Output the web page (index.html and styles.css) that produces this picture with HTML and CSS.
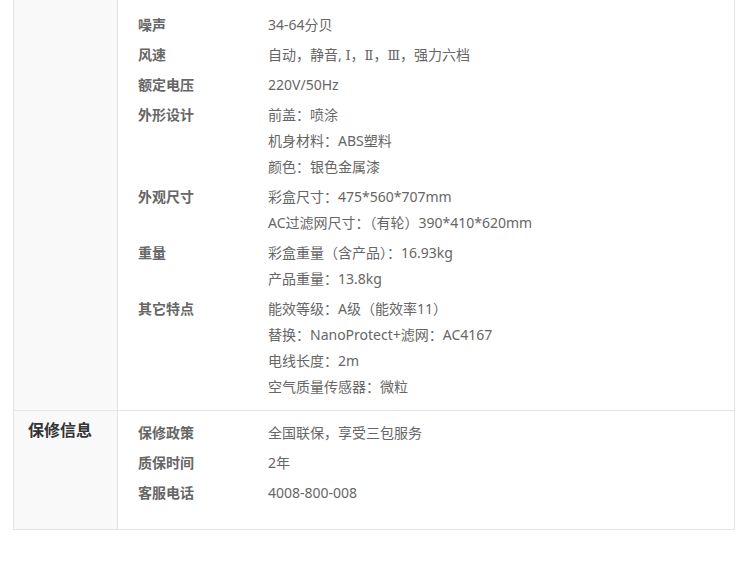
FILE: index.html
```html
<!DOCTYPE html>
<html lang="zh-CN">
<head>
  <meta charset="UTF-8">
  <title>产品参数</title>
  <meta name="viewport" content="width=device-width, initial-scale=1.0">
  <link rel="stylesheet" href="styles.css">
</head>
<body>
  <div class="spec-table">
    <!-- 主要参数（标题在上方，截图中不可见） -->
    <div class="spec-group spec-group-first">
      <div class="spec-cat"></div>
      <div class="spec-rows">
        <dl class="spec-row">
          <dt>噪声</dt>
          <dd>34-64分贝</dd>
        </dl>
        <dl class="spec-row">
          <dt>风速</dt>
          <dd>自动，静音, <span class="roman">Ⅰ</span>，<span class="roman">Ⅱ</span>，<span class="roman">Ⅲ</span>，强力六档</dd>
        </dl>
        <dl class="spec-row">
          <dt>额定电压</dt>
          <dd>220V/50Hz</dd>
        </dl>
        <dl class="spec-row">
          <dt>外形设计</dt>
          <dd>前盖：喷涂</dd>
          <dd>机身材料：ABS塑料</dd>
          <dd>颜色：银色金属漆</dd>
        </dl>
        <dl class="spec-row">
          <dt>外观尺寸</dt>
          <dd>彩盒尺寸：475*560*707mm</dd>
          <dd>AC过滤网尺寸：（有轮）390*410*620mm</dd>
        </dl>
        <dl class="spec-row">
          <dt>重量</dt>
          <dd>彩盒重量（含产品）：16.93kg</dd>
          <dd>产品重量：13.8kg</dd>
        </dl>
        <dl class="spec-row">
          <dt>其它特点</dt>
          <dd>能效等级：A级（能效率11）</dd>
          <dd>替换：NanoProtect+滤网：AC4167</dd>
          <dd>电线长度：2m</dd>
          <dd>空气质量传感器：微粒</dd>
        </dl>
      </div>
    </div>

    <div class="spec-group spec-group-last">
      <div class="spec-cat">保修信息</div>
      <div class="spec-rows">
        <dl class="spec-row">
          <dt>保修政策</dt>
          <dd>全国联保，享受三包服务</dd>
        </dl>
        <dl class="spec-row">
          <dt>质保时间</dt>
          <dd>2年</dd>
        </dl>
        <dl class="spec-row">
          <dt>客服电话</dt>
          <dd>4008-800-008</dd>
        </dl>
      </div>
    </div>
  </div>
</body>
</html>
```

FILE: styles.css
```css
/* Colours */
:root {
  --border: #e5e5e5;
  --cat-bg: #f9f9f9;
  --text: #666;
  --title: #333;
}

* {
  margin: 0;
  padding: 0;
  box-sizing: border-box;
}

body {
  background: #fff;
  font-family: "Noto Sans", "Noto Sans CJK SC", sans-serif;
  font-size: 14px;
  color: var(--text);
}

/* Spec table */
.spec-table {
  width: 722px;
  margin-left: 13px;
  border-left: 1px solid var(--border);
  border-right: 1px solid var(--border);
}

.spec-group {
  display: flex;
  border-bottom: 1px solid var(--border);
}

.spec-cat {
  width: 104px;
  flex-shrink: 0;
  background: var(--cat-bg);
  border-right: 1px solid var(--border);
  padding: 6px 0 0 14px;
  font-size: 16px;
  line-height: 26px;
  font-weight: 700;
  color: var(--title);
}

.spec-rows {
  flex-grow: 1;
  padding: 9px 0 10px 20px;
  display: flex;
  flex-direction: column;
  gap: 4px;
}
.spec-group-first .spec-rows {
  padding-top: 12px;
}
.spec-group-last .spec-rows {
  padding-bottom: 23px;
}

.spec-row {
  display: grid;
  grid-template-columns: 130px 1fr;
  line-height: 26px;
}
.spec-row dt {
  grid-column: 1;
  font-weight: 700;
}
.spec-row dd {
  grid-column: 2;
  height: 26px;
}

/* Roman numerals come out in a serif face in the original */
.roman {
  font-family: "DejaVu Serif", serif;
  font-size: 13px;
  line-height: 1;
}
```
